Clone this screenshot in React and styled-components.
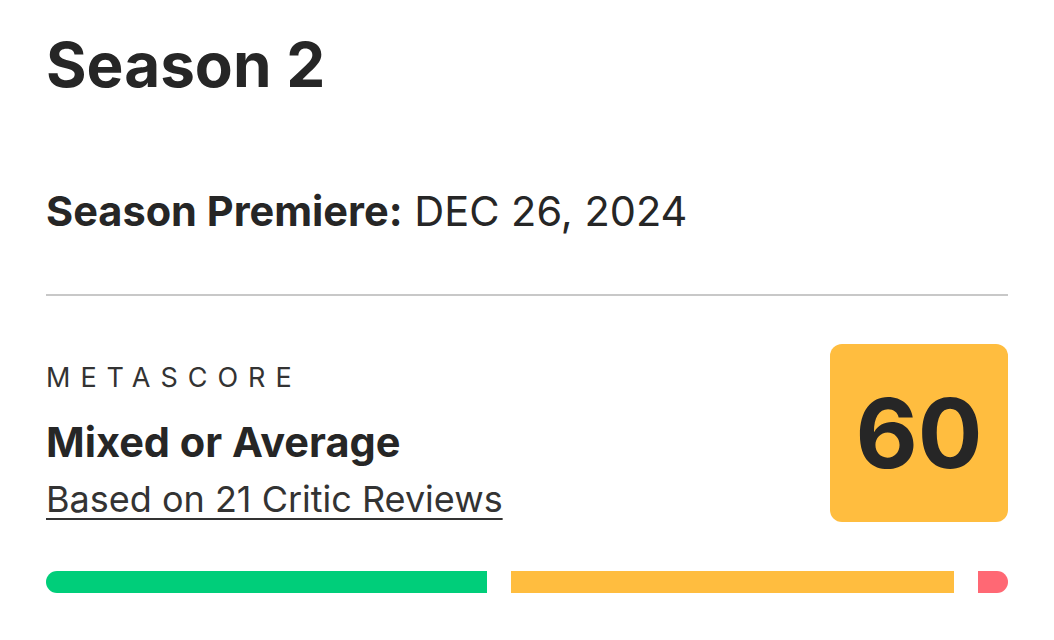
import React from 'react';
import styled, { createGlobalStyle } from 'styled-components';

const GlobalStyle = createGlobalStyle`
  body {
    margin: 0;
    background: #fff;
    font-family: Inter, "Liberation Sans", sans-serif;
    color: #262626;
  }
`;

const Page = styled.div`
  width: 1054px;
  height: 640px;
  box-sizing: border-box;
  padding: 25px 46px 0;
  overflow: hidden;
`;

const Title = styled.h1`
  margin: 0;
  font-size: 62px;
  font-weight: 700;
  line-height: 80px;
`;

const Premiere = styled.p`
  margin: 82px 0 0;
  font-size: 41.5px;
  line-height: 48px;
  font-weight: 400;

  b {
    font-weight: 700;
  }
`;

const Divider = styled.hr`
  margin: 59px 0 0;
  border: none;
  height: 2px;
  background: #c8c8c8;
`;

const ScoreRow = styled.div`
  display: flex;
  justify-content: space-between;
  align-items: flex-start;
  margin-top: 48px;
`;

const Info = styled.div`
  display: flex;
  flex-direction: column;
`;

const Label = styled.span`
  margin-top: 18px;
  font-size: 27px;
  line-height: 32px;
  letter-spacing: 10px;
  color: #333;
`;

const Verdict = styled.span`
  margin-top: 24px;
  font-size: 41.5px;
  line-height: 48px;
  font-weight: 700;
`;

const ReviewsLink = styled.a`
  margin-top: 12px;
  font-size: 36px;
  line-height: 42px;
  color: #333;
  text-decoration: underline;
  text-decoration-thickness: 2px;
  text-underline-offset: 6px;
`;

const ScoreBox = styled.div`
  width: 178px;
  height: 178px;
  border-radius: 12px;
  background: #ffbd3f;
  display: flex;
  align-items: center;
  justify-content: center;
  font-size: 96px;
  font-weight: 700;
  color: #262626;
`;

const Bars = styled.div`
  display: flex;
  gap: 24px;
  margin-top: 49px;
`;

const Bar = styled.div`
  flex: ${p => p.$grow} 1 0;
  height: 22px;
  background: ${p => p.$color};
  border-radius: ${p => p.$radius};
`;

const bars = [
  { grow: 441, color: '#00ce7a', radius: '11px 0 0 11px' },
  { grow: 444, color: '#ffbd3f', radius: '0' },
  { grow: 30, color: '#ff6874', radius: '0 11px 11px 0' },
];

export default function App() {
  return (
    <Page>
      <GlobalStyle />
      <Title>Season 2</Title>
      <Premiere><b>Season Premiere:</b> DEC 26, 2024</Premiere>
      <Divider />
      <ScoreRow>
        <Info>
          <Label>METASCORE</Label>
          <Verdict>Mixed or Average</Verdict>
          <ReviewsLink href="#">Based on 21 Critic Reviews</ReviewsLink>
        </Info>
        <ScoreBox>60</ScoreBox>
      </ScoreRow>
      <Bars>
        {bars.map((b, i) => (
          <Bar key={i} $grow={b.grow} $color={b.color} $radius={b.radius} />
        ))}
      </Bars>
    </Page>
  );
}
